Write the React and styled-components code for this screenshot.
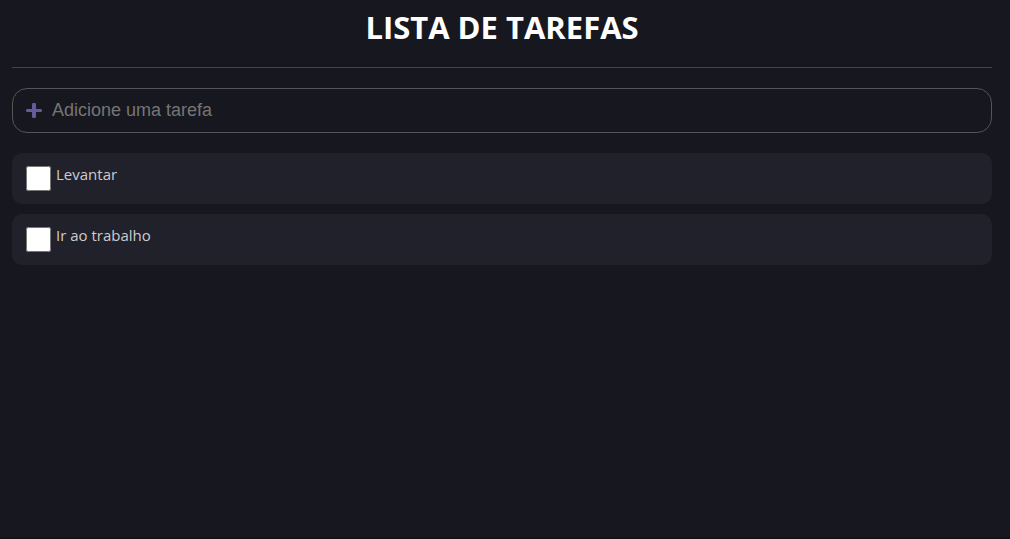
import React, { useState } from "react";
import styled, { createGlobalStyle } from "styled-components";

const GlobalStyle = createGlobalStyle`
  * {
    box-sizing: border-box;
    margin: 0;
    padding: 0;
  }

  body {
    background: #17171f;
    color: #ccc;
    font-family: "Segoe UI", "Open Sans", "Noto Sans", sans-serif;
  }
`;

const Page = styled.div`
  min-height: 100vh;
  border-bottom: 2px solid #180f17;
`;

const Area = styled.main`
  max-width: 980px;
  margin: 0 18px 0 12px;
`;

const Title = styled.h1`
  padding: 3px 0 16px;
  border-bottom: 1px solid #444448;
  color: #fff;
  font-size: 31px;
  line-height: 48px;
  font-weight: 700;
  text-align: center;
`;

const AddForm = styled.form`
  display: flex;
  align-items: center;
  gap: 9px;
  height: 45px;
  margin: 20px 0;
  padding: 0 12px;
  border: 1px solid #555;
  border-radius: 15px;
`;

const AddButton = styled.button`
  display: flex;
  padding: 0;
  border: 0;
  background: none;
  color: #645a9c;
  cursor: pointer;
`;

const AddInput = styled.input`
  flex: 1;
  min-width: 0;
  border: 0;
  outline: 0;
  background: transparent;
  color: #fff;
  font-family: "Liberation Sans", Arial, sans-serif;
  font-size: 18px;

  &::placeholder {
    color: #757575;
    opacity: 1;
  }
`;

const TaskList = styled.ul`
  display: flex;
  flex-direction: column;
  gap: 10px;
  list-style: none;
`;

const TaskRow = styled.li`
  display: flex;
  align-items: flex-start;
  gap: 5px;
  min-height: 51px;
  padding: 9px 14px;
  border-radius: 10px;
  background: #21212c;
`;

const TaskCheck = styled.input`
  width: 25px;
  height: 25px;
  margin-top: 4px;
`;

const TaskLabel = styled.label`
  color: #ccc;
  font-size: 15px;
  line-height: 24px;
  text-decoration: ${(p) => (p.$done ? "line-through" : "none")};
`;

export default function App() {
  const [tasks, setTasks] = useState([
    { id: 1, name: "Levantar", done: false },
    { id: 2, name: "Ir ao trabalho", done: false },
  ]);
  const [text, setText] = useState("");

  const addTask = (event) => {
    event.preventDefault();
    if (!text.trim()) return;
    setTasks([...tasks, { id: tasks.length + 1, name: text.trim(), done: false }]);
    setText("");
  };

  const toggle = (id) =>
    setTasks(tasks.map((t) => (t.id === id ? { ...t, done: !t.done } : t)));

  return (
    <Page>
      <GlobalStyle />
      <Area>
        <Title>LISTA DE TAREFAS</Title>
        <AddForm onSubmit={addTask}>
          <AddButton type="submit" aria-label="Adicionar">
            <svg width="18" height="18" viewBox="0 0 18 18" fill="currentColor">
              <rect x="7" y="1" width="4" height="15" rx="1.2" />
              <rect x="1" y="7" width="16" height="3" rx="1.2" />
            </svg>
          </AddButton>
          <AddInput
            type="text"
            aria-label="Adicione uma tarefa"
            placeholder="Adicione uma tarefa"
            value={text}
            onChange={(e) => setText(e.target.value)}
          />
        </AddForm>
        <TaskList>
          {tasks.map((task) => (
            <TaskRow key={task.id}>
              <TaskCheck
                type="checkbox"
                id={`task-${task.id}`}
                checked={task.done}
                onChange={() => toggle(task.id)}
              />
              <TaskLabel htmlFor={`task-${task.id}`} $done={task.done}>
                {task.name}
              </TaskLabel>
            </TaskRow>
          ))}
        </TaskList>
      </Area>
    </Page>
  );
}
